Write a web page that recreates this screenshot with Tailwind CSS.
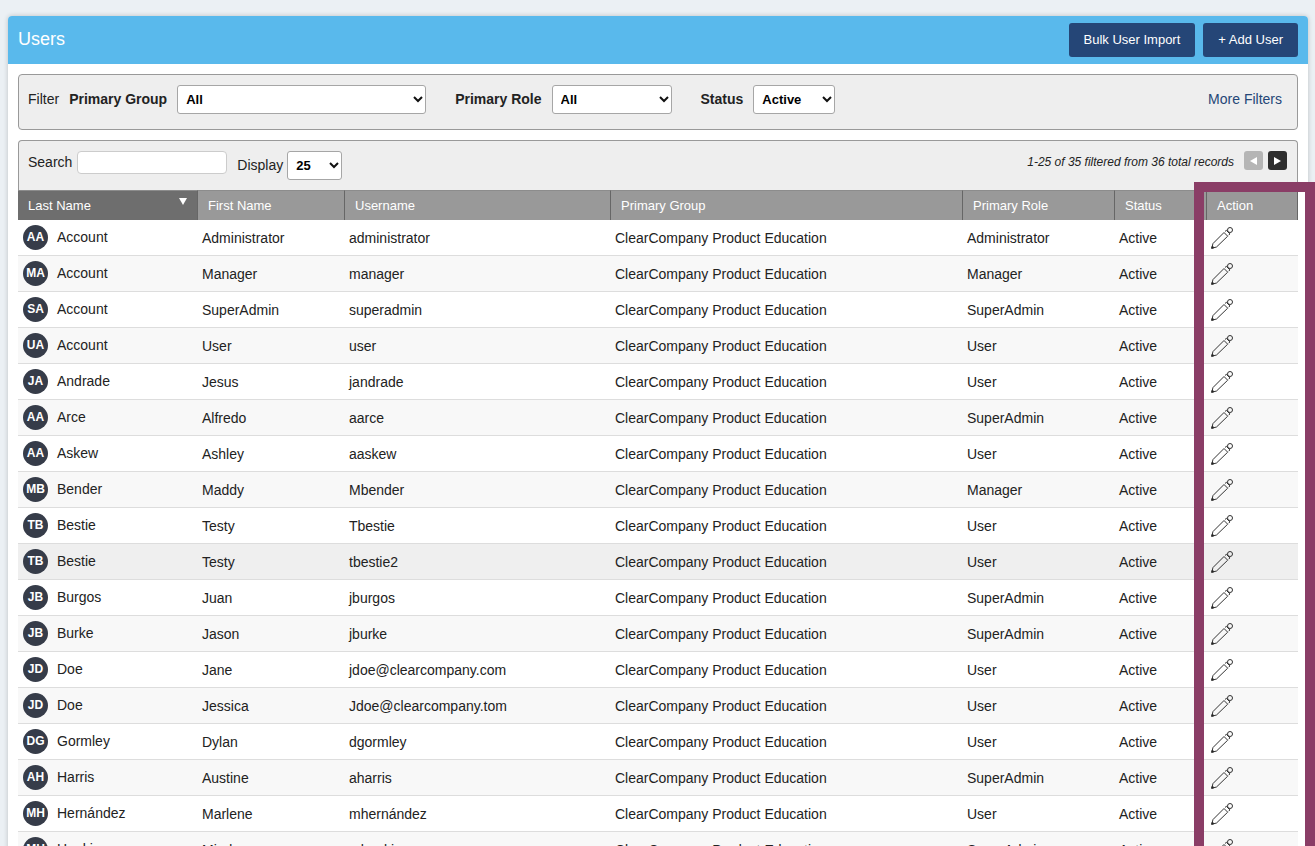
<!DOCTYPE html>
<html lang="en">
<head>
    <meta charset="UTF-8">
    <meta name="viewport" content="width=device-width, initial-scale=1.0">
    <script src="https://cdn.jsdelivr.net/npm/@tailwindcss/browser@4"></script>
    <title>Users</title>
</head>
<body class="h-screen overflow-hidden bg-[#ebf0f4] pt-4 pl-2 pr-[7px] font-['Liberation_Sans',Arial,sans-serif] text-sm text-[#222]">
    <main class="rounded-t bg-white shadow-[0_0_5px_rgba(0,0,0,0.2)]">
        <header class="flex h-12 items-center justify-between rounded-t bg-[#59b9ec] px-2.5">
            <h1 class="pb-0.5 text-lg text-white">Users</h1>
            <div class="flex gap-2 text-[13px] text-white">
                <button type="button" class="h-[34px] rounded-[3px] bg-[#254677] px-[15px] hover:bg-[#1b355c]">Bulk User Import</button>
                <button type="button" class="h-[34px] rounded-[3px] bg-[#254677] px-[15px] hover:bg-[#1b355c]">+ Add User</button>
            </div>
        </header>

        <div class="px-2.5 pt-2.5">
            <form class="flex h-14 items-start rounded border border-[#999] bg-[#eee] pt-2.5 pr-2.5 pl-[9px]">
                <span class="mr-2.5 leading-7">Filter</span>
                <label for="group" class="mr-2.5 font-bold leading-7">Primary Group</label>
                <div class="relative mr-[29px]">
                    <select id="group" class="h-[29px] w-[249px] appearance-none rounded-[3px] border border-[#a6a6a6] bg-white px-2 pt-px text-[13px] font-bold text-black">
                        <option>All</option>
                    </select>
                    <svg class="pointer-events-none absolute top-2.5 right-[3px]" width="10" height="8" viewBox="0 0 10 8" fill="none" stroke="#111" stroke-width="2"><path d="M1 2l4 4 4-4"/></svg>
                </div>
                <label for="role" class="mr-2.5 font-bold leading-7">Primary Role</label>
                <div class="relative mr-[29px]">
                    <select id="role" class="h-[29px] w-[120px] appearance-none rounded-[3px] border border-[#a6a6a6] bg-white px-2 pt-px text-[13px] font-bold text-black">
                        <option>All</option>
                    </select>
                    <svg class="pointer-events-none absolute top-2.5 right-[3px]" width="10" height="8" viewBox="0 0 10 8" fill="none" stroke="#111" stroke-width="2"><path d="M1 2l4 4 4-4"/></svg>
                </div>
                <label for="status" class="mr-2.5 font-bold leading-7">Status</label>
                <div class="relative">
                    <select id="status" class="h-[29px] w-[82px] appearance-none rounded-[3px] border border-[#a6a6a6] bg-white px-2 pt-px text-[13px] font-bold text-black">
                        <option>Active</option>
                    </select>
                    <svg class="pointer-events-none absolute top-2.5 right-[3px]" width="10" height="8" viewBox="0 0 10 8" fill="none" stroke="#111" stroke-width="2"><path d="M1 2l4 4 4-4"/></svg>
                </div>
                <a href="#" class="mr-[5px] ml-auto leading-7 text-[#254677] hover:underline">More Filters</a>
            </form>

            <div class="mt-2.5 flex h-[50px] items-start rounded-t border border-b-0 border-[#999] bg-[#eee] pt-2.5 pr-2.5 pl-[9px]">
                <label for="search" class="mr-[5px] leading-[22px]">Search</label>
                <input type="text" id="search" class="mr-2.5 h-[23px] w-[150px] rounded border border-[#ccc] bg-white px-2">
                <label for="display" class="mr-1 leading-7">Display</label>
                <div class="relative">
                    <select id="display" class="h-[29px] w-[55px] appearance-none rounded-[3px] border border-[#a6a6a6] bg-white px-2 pt-px text-[13px] font-bold text-black">
                        <option>25</option>
                    </select>
                    <svg class="pointer-events-none absolute top-2.5 right-[3px]" width="10" height="8" viewBox="0 0 10 8" fill="none" stroke="#111" stroke-width="2"><path d="M1 2l4 4 4-4"/></svg>
                </div>
                <div class="ml-auto flex gap-[5px]">
                    <span class="mr-[5px] text-xs leading-[22px] italic">1-25 of 35 filtered from 36 total records</span>
                    <button type="button" aria-label="Previous page" disabled class="flex size-[19px] items-center justify-center rounded-[3px] bg-[#b5b5b5]">
                        <svg width="7" height="8" viewBox="0 0 7 8" fill="#fff"><path d="M7 0v8L0 4z"/></svg>
                    </button>
                    <button type="button" aria-label="Next page" class="flex size-[19px] items-center justify-center rounded-[3px] bg-[#2e2e2e]">
                        <svg width="7" height="8" viewBox="0 0 7 8" fill="#fff"><path d="M0 0v8l7-4z"/></svg>
                    </button>
                </div>
            </div>

            <div class="relative">
                <table class="w-full table-fixed border-separate border-spacing-0 text-left">
                    <thead class="text-[13px] text-white">
                        <tr class="h-[30px] *:border-t *:border-r *:border-t-[#8c8c8c] *:border-r-[#666] *:bg-[#999] *:px-2.5 *:pt-0.5 *:pb-0 *:font-normal">
                            <th class="w-[180px] bg-[#6e6e6e]!">
                                <div class="flex justify-between">Last Name
                                    <svg class="mt-px" width="8" height="7" viewBox="0 0 8 7" fill="#fff"><path d="M0 0h8L4 7z"/></svg>
                                </div>
                            </th>
                            <th class="w-[147px]">First Name</th>
                            <th class="w-[266px]">Username</th>
                            <th>Primary Group</th>
                            <th class="w-[152px]">Primary Role</th>
                            <th class="w-[92px]">Status</th>
                            <th class="w-[91px]">Action</th>
                        </tr>
                    </thead>
                    <tbody id="users"></tbody>
                </table>
                <!-- highlight around the Action column -->
                <div class="pointer-events-none absolute -top-2 -right-[17px] -bottom-2 w-[121px] border-10 border-[#8a3d66]"></div>
            </div>
        </div>
    </main>

    <script>
        const users = [
            ["Account", "Administrator", "administrator", "Administrator", "AA"],
            ["Account", "Manager", "manager", "Manager", "MA"],
            ["Account", "SuperAdmin", "superadmin", "SuperAdmin", "SA"],
            ["Account", "User", "user", "User", "UA"],
            ["Andrade", "Jesus", "jandrade", "User", "JA"],
            ["Arce", "Alfredo", "aarce", "SuperAdmin", "AA"],
            ["Askew", "Ashley", "aaskew", "User", "AA"],
            ["Bender", "Maddy", "Mbender", "Manager", "MB"],
            ["Bestie", "Testy", "Tbestie", "User", "TB"],
            ["Bestie", "Testy", "tbestie2", "User", "TB"],
            ["Burgos", "Juan", "jburgos", "SuperAdmin", "JB"],
            ["Burke", "Jason", "jburke", "SuperAdmin", "JB"],
            ["Doe", "Jane", "jdoe@clearcompany.com", "User", "JD"],
            ["Doe", "Jessica", "Jdoe@clearcompany.tom", "User", "JD"],
            ["Gormley", "Dylan", "dgormley", "User", "DG"],
            ["Harris", "Austine", "aharris", "SuperAdmin", "AH"],
            ["Hernández", "Marlene", "mhernández", "User", "MH"],
            ["Hopkins", "Mindy", "mhopkins", "SuperAdmin", "MH"]
        ];
        const selected = 9;

        document.getElementById("users").innerHTML = users.map(([last, first, username, role, initials], i) => {
            const bg = i === selected ? "bg-[#efefef]" : i % 2 ? "bg-[#f8f8f8]" : "bg-white";
            return `
            <tr class="h-9 ${bg} *:border-b *:border-[#ddd]">
                <td class="pl-[5px]">
                    <div class="flex items-center gap-[9px]">
                        <span class="flex size-[25px] items-center justify-center rounded-full bg-[#363c49] pb-px text-xs font-bold text-white">${initials}</span>
                        <span class="pb-0.5">${last}</span>
                    </div>
                </td>
                <td class="pl-1">${first}</td>
                <td class="pl-1">${username}</td>
                <td class="pl-1">ClearCompany Product Education</td>
                <td class="pl-1">${role}</td>
                <td class="pl-1">Active</td>
                <td class="pl-1">
                    <button type="button" aria-label="Edit ${first} ${last}" class="block">
                        <svg width="22" height="22" viewBox="0 0 22 22" fill="none" stroke="#333" stroke-width="1"><path d="M.7 21.3L2 16.500 13 5.500l3.700 3.700L5.500 20z"/><path d="M14 4.500l1.300-1.200 3.600 3.600-1.200 1.300"/><circle cx="19" cy="3" r="2.500"/><path d="M.7 21.300l.6-2.300 1.700 1.700z" fill="#111"/></svg>
                    </button>
                </td>
            </tr>`;
        }).join("");
    </script>
</body>
</html>
